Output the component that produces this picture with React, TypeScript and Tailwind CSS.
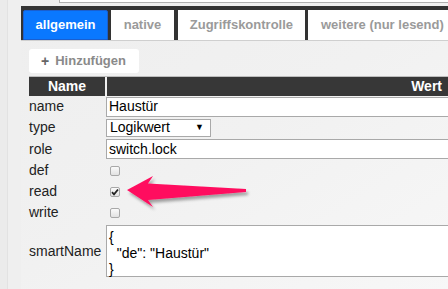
import type { ReactNode } from 'react';

const font = { fontFamily: '"Liberation Sans", Arial, sans-serif' };

function Checkbox({ checked = false }: { checked?: boolean }) {
  return (
    <span className="flex h-[10px] w-[10px] items-center justify-center rounded-[2px] border border-[#a8a8a8] bg-gradient-to-b from-[#fafafa] to-[#e2e2e2]">
      {checked && (
        <svg width="8" height="8" viewBox="0 0 8 8">
          <path d="M1 4.2 L3 6.3 L7 1.5" fill="none" stroke="#222" strokeWidth="1.8" />
        </svg>
      )}
    </span>
  );
}

function Row({ label, height, children }: { label: string; height: string; children: ReactNode }) {
  return (
    <div className={`flex items-center ${height}`}>
      <div className="w-[77px] shrink-0 text-[14px] text-[#222]">{label}</div>
      <div className="flex min-w-0 flex-1 items-center">{children}</div>
    </div>
  );
}

export default function App() {
  return (
    <div
      className="relative flex h-[289px] w-[448px] overflow-hidden bg-gradient-to-br from-[#eeeeee] via-[#f1f1f1] to-[#f7f7f7]"
      style={font}
    >
      {/* left strip */}
      <div className="flex w-[21px] shrink-0">
        <div className="w-[7px] bg-[#ebebeb]" />
        <div className="w-[14px] border-l border-[#e2e2e2] bg-[#efefef]" />
      </div>

      <div className="flex min-w-0 flex-1 flex-col">
        {/* bottom edge of input above */}
        <div className="ml-[38px] h-[3px] border-b border-l border-[#b0b0b0] bg-white" />

        {/* Tabs */}
        <div className="mt-[3px] flex h-[35px] gap-[3px] border-b border-[#cfcfcf] bg-[#333] pl-[2px] pt-[4px]">
          <div className="flex w-[87px] items-center justify-center rounded-t-[2px] border border-[#1a5fd0] bg-[#0a78ff] text-[13px] font-bold text-white">
            allgemein
          </div>
          <div className="flex w-[64px] items-center justify-center bg-white text-[13px] font-bold text-[#9a9a9a]">
            native
          </div>
          <div className="ml-[1px] flex w-[130px] items-center justify-center bg-white text-[13px] font-bold text-[#9a9a9a]">
            Zugriffskontrolle
          </div>
          <div className="flex w-[140px] shrink-0 items-center bg-white pl-[13px] text-[13px] font-bold text-[#9a9a9a]">
            weitere (nur lesend)
          </div>
        </div>

        {/* Add button */}
        <div className="ml-[8px] mt-[8px] flex h-[24px] w-[110px] items-center gap-[6px] rounded-[3px] bg-white pl-[12px] text-[13px] font-bold text-[#8a8a8a]">
          <span className="text-[14px] text-[#666]">+</span>
          <span>Hinzufügen</span>
        </div>

        {/* Table */}
        <div className="ml-[8px] mt-[3px] flex flex-col">
          <div className="flex h-[20px] gap-[2px] border-t border-[#bdbdbd]">
            <div className="flex w-[76px] shrink-0 items-center justify-center bg-[#373737] text-[14px] font-bold text-white">
              Name
            </div>
            <div className="flex flex-1 items-center justify-end bg-[#373737] pr-[6px] text-[14px] font-bold text-white">
              Wert
            </div>
          </div>

          <Row label="name" height="h-[21px]">
            <div className="-mr-[4px] flex h-[20px] flex-1 items-center border border-[#a9a9a9] bg-white pl-[2px] text-[14px] text-black">
              Haustür
            </div>
          </Row>
          <Row label="type" height="h-[21px]">
            <div className="flex h-[18px] w-[105px] items-center justify-between border border-[#a9a9a9] bg-white pl-[3px] pr-[6px] text-[14px] text-black">
              <span>Logikwert</span>
              <span className="text-[9px]">▼</span>
            </div>
          </Row>
          <Row label="role" height="h-[22px]">
            <div className="-mr-[4px] flex h-[20px] flex-1 items-center border border-[#a9a9a9] bg-white pl-[2px] text-[14px] text-black">
              switch.lock
            </div>
          </Row>
          <Row label="def" height="h-[21px]">
            <div className="pl-[4px]">
              <Checkbox />
            </div>
          </Row>
          <Row label="read" height="h-[21px]">
            <div className="pl-[4px]">
              <Checkbox checked />
            </div>
          </Row>
          <Row label="write" height="h-[21px]">
            <div className="pl-[4px]">
              <Checkbox />
            </div>
          </Row>
          <Row label="smartName" height="h-[56px]">
            <div className="-mr-[4px] h-[52px] flex-1 whitespace-pre border border-[#a9a9a9] bg-white pl-[2px] pt-[3px] text-[14px] leading-[16px] text-black">
              {'{\n  "de": "Haustür"\n}'}
            </div>
          </Row>
        </div>
      </div>

      {/* pink arrow */}
      <svg className="absolute left-[120px] top-[170px]" width="140" height="45" viewBox="0 0 140 45">
        <defs>
          <filter id="sh" x="-20%" y="-40%" width="140%" height="180%">
            <feDropShadow dx="2" dy="3" stdDeviation="1.5" floodColor="#000" floodOpacity="0.35" />
          </filter>
        </defs>
        <path
          d="M7 20 L33 6 L28 13.5 L126 19 L126 22 L28 30 L33 37 Z"
          fill="#ff0f5f"
          filter="url(#sh)"
        />
      </svg>
    </div>
  );
}
